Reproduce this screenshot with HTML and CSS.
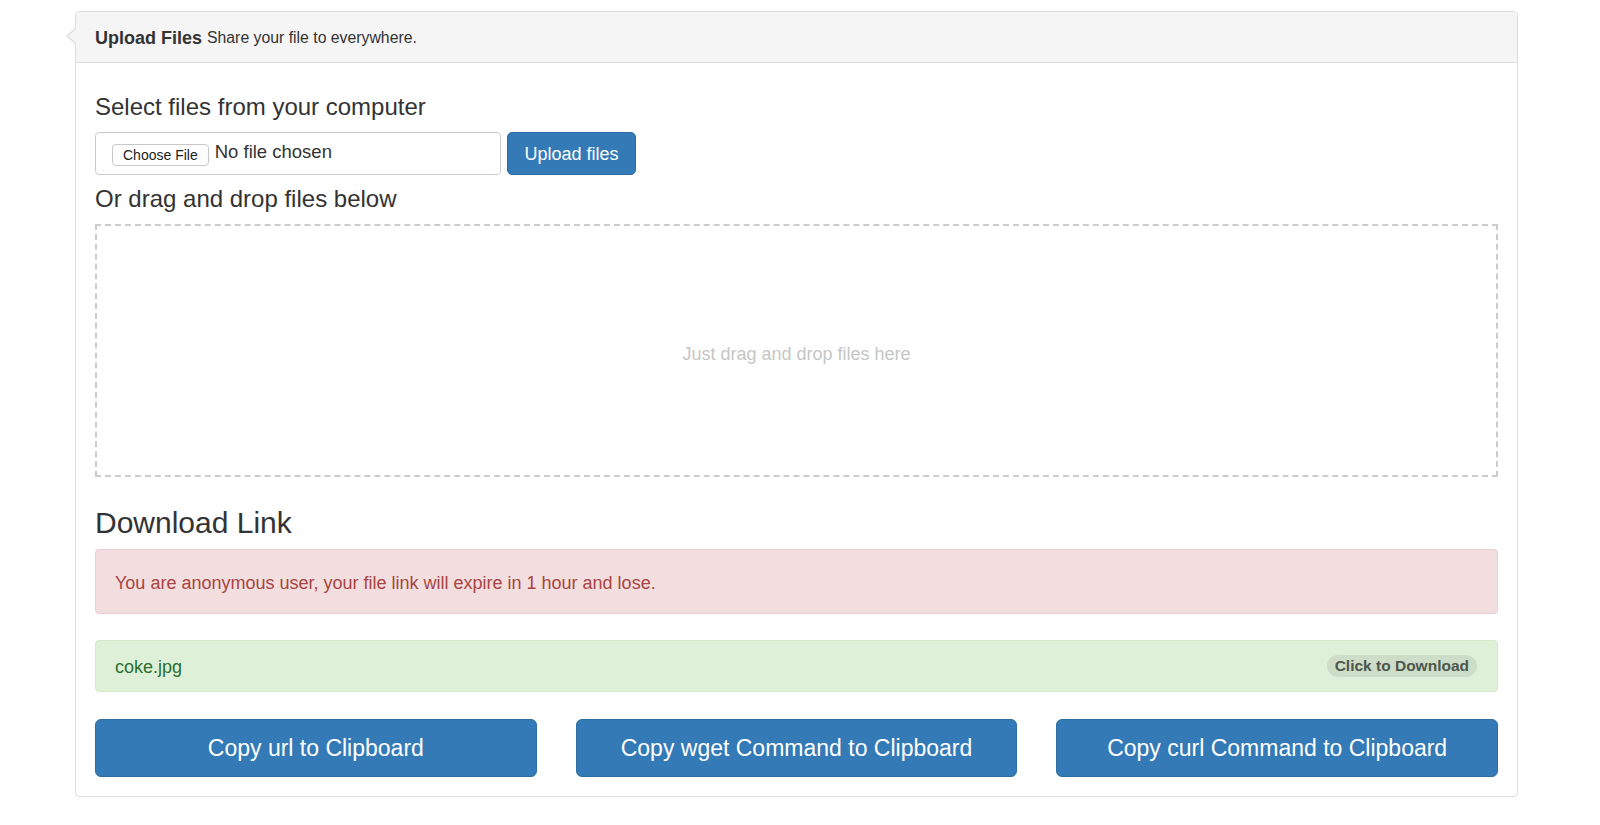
FILE: index.html
```html
<!DOCTYPE html>
<html lang="en">
<head>
<meta charset="utf-8">
<title>Upload Files</title>
<link rel="stylesheet" href="styles.css">
</head>
<body>
<div class="page">
  <div class="panel">
    <div class="panel-heading">
      <span class="panel-title">Upload Files</span> <small class="panel-sub">Share your file to everywhere.</small>
    </div>
    <div class="panel-body">
      <h4 class="section-title first">Select files from your computer</h4>
      <div class="upload-row">
        <div class="file-box">
          <span class="choose-btn">Choose File</span>
          <span class="file-name">No file chosen</span>
        </div>
        <button class="btn btn-primary">Upload files</button>
      </div>
      <h4 class="section-title">Or drag and drop files below</h4>
      <div class="drop-zone">Just drag and drop files here</div>
      <h3 class="download-title">Download Link</h3>
      <div class="alert alert-danger">You are anonymous user, your file link will expire in 1 hour and lose.</div>
      <div class="alert alert-success file-row">
        <span class="file-link">coke.jpg</span>
        <span class="badge">Click to Download</span>
      </div>
      <div class="copy-row">
        <button class="btn btn-primary btn-lg">Copy url to Clipboard</button>
        <button class="btn btn-primary btn-lg">Copy wget Command to Clipboard</button>
        <button class="btn btn-primary btn-lg">Copy curl Command to Clipboard</button>
      </div>
    </div>
  </div>
</div>
</body>
</html>
```

FILE: styles.css
```css
html, body {
  margin: 0;
  padding: 0;
  background: #fff;
}

body {
  font-family: "Liberation Sans", Helvetica, Arial, sans-serif;
  font-size: 18px;
  color: #333;
}

.page {
  padding: 11px 0 0 75px;
}

.panel {
  position: relative;
  width: 1441px;
  border: 1px solid #ddd;
  border-radius: 4px;
  background: #fff;
}

.panel::before {
  content: "";
  position: absolute;
  left: -10px;
  top: 16px;
  width: 0;
  height: 0;
  border-top: 8px solid transparent;
  border-bottom: 8px solid transparent;
  border-right: 9px solid #ddd;
}

.panel::after {
  content: "";
  position: absolute;
  left: -8px;
  top: 17px;
  width: 0;
  height: 0;
  border-top: 7px solid transparent;
  border-bottom: 7px solid transparent;
  border-right: 8px solid #f5f5f5;
}

.panel-heading {
  box-sizing: border-box;
  height: 51px;
  display: flex;
  align-items: center;
  padding: 2px 19px 0 19px;
  background: #f5f5f5;
  border-bottom: 1px solid #ddd;
  border-radius: 3px 3px 0 0;
}

.panel-title {
  font-weight: bold;
  font-size: 18px;
  color: #333;
}

.panel-sub {
  font-size: 15.8px;
  color: #333;
  margin-left: 5px;
}

.panel-body {
  padding: 20px 19px 19px 19px;
}

.section-title {
  margin: 11px 0 12px 0;
  font-size: 24px;
  line-height: 26px;
  font-weight: normal;
  color: #333;
}

.upload-row {
  display: flex;
  gap: 6px;
}

.file-box {
  box-sizing: border-box;
  width: 406px;
  height: 43px;
  border: 1px solid #ccc;
  border-radius: 4px;
  display: flex;
  align-items: center;
  padding: 0 0 0 16px;
}

.choose-btn {
  box-sizing: border-box;
  height: 22px;
  display: inline-flex;
  align-items: center;
  padding: 0 10px;
  font-size: 14px;
  color: #222;
  border: 1px solid #c8c8c8;
  border-radius: 4px;
  background: #fff;
  margin-top: 2px;
}

.file-name {
  margin-left: 6px;
  font-size: 18.5px;
  color: #333;
  margin-top: -4px;
}

.btn {
  font-family: "Liberation Sans", Helvetica, Arial, sans-serif;
  cursor: pointer;
  color: #fff;
  background: #337ab7;
  border: 1px solid #2e6da4;
  border-radius: 5px;
}

.upload-row .btn {
  box-sizing: border-box;
  width: 129px;
  height: 43px;
  font-size: 18px;
  padding: 2px 0 0 0;
}

.drop-zone {
  box-sizing: border-box;
  height: 253px;
  border: 2px dashed #ccc;
  display: flex;
  align-items: center;
  justify-content: center;
  padding-top: 8px;
  font-size: 18px;
  color: #c6c6c6;
}

.download-title {
  margin: 29px 0 10px 0;
  font-size: 30px;
  line-height: 33px;
  font-weight: normal;
  color: #333;
}

.alert {
  box-sizing: border-box;
  border: 1px solid transparent;
  border-radius: 4px;
  line-height: 25px;
  font-size: 18px;
}

.alert-danger {
  height: 65px;
  padding: 21px 19px 17px 19px;
  color: #a94442;
  background: #f2dede;
  border-color: #ebccd1;
}

.alert-success {
  margin-top: 26px;
  color: #3c763d;
  background: #dff0d8;
  border-color: #d6e9c6;
}

.file-row {
  height: 52px;
  display: flex;
  align-items: center;
  justify-content: space-between;
  padding: 0 20px 0 19px;
}

.file-link {
  color: #2b6e2d;
  margin-top: 3px;
}

.badge {
  box-sizing: border-box;
  height: 22px;
  display: inline-flex;
  align-items: center;
  padding: 0 8px;
  border-radius: 11px;
  background: rgba(0, 0, 0, 0.08);
  color: #4d564d;
  font-weight: bold;
  font-size: 15.5px;
  margin-top: -1px;
}

.copy-row {
  margin-top: 27px;
  display: grid;
  grid-template-columns: 1fr 1fr 1fr;
  gap: 39px;
}

.btn-lg {
  height: 58px;
  font-size: 23px;
  border-radius: 6px;
  padding: 0;
}
```
